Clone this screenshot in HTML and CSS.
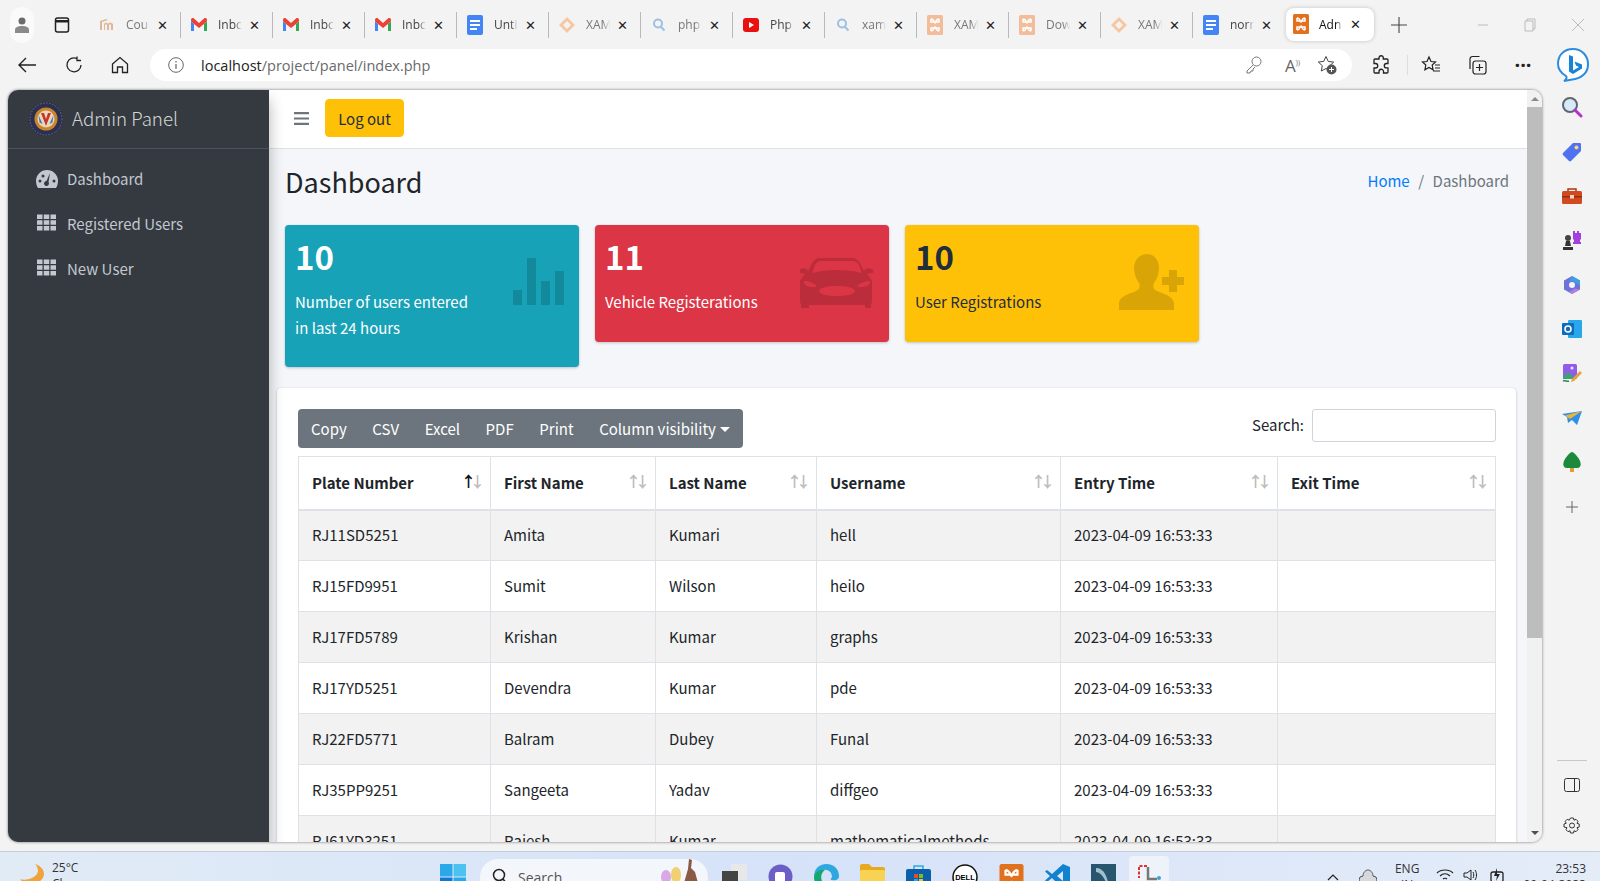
FILE: index.html
```html
<!DOCTYPE html>
<html lang="en">
<head>
    <meta charset="UTF-8">
    <meta name="viewport" content="width=device-width, initial-scale=1.0">
    <title>Admin Panel</title>
    <link rel="stylesheet" href="styles.css">
</head>
<body>
    <svg class="defs" width="0" height="0">
        <symbol id="i-gmail" viewBox="0 0 16 14"><path d="M0 3v10h3V6z" fill="#4285f4"/><path d="M13 6v7h3V3z" fill="#34a853"/><path d="M0 3l3 3 5 4 5-4 3-3V2c0-2-2-2.500-3-1.500L8 5 3 .5C2-.5 0 0 0 2z" fill="#ea4335"/></symbol>
        <symbol id="i-doc" viewBox="0 0 16 20"><rect width="16" height="20" rx="2" fill="#4285f4"/><path d="M3 5h10v2H3zM3 9h10v2H3zM3 13h7v2H3z" fill="#fff"/></symbol>
        <symbol id="i-diamond" viewBox="0 0 16 16"><path d="M8 0l8 8-8 8-8-8zM8 4L4 8l4 4 4-4z" fill="#f6c7a0" fill-rule="evenodd"/></symbol>
        <symbol id="i-search" viewBox="0 0 16 16"><circle cx="7" cy="6.500" r="4" fill="none" stroke="#9cc0e4" stroke-width="2"/><path d="M10 10l3.500 3.500" stroke="#9cc0e4" stroke-width="2"/></symbol>
        <symbol id="i-xampp" viewBox="0 0 16 20"><rect width="16" height="20" rx="1.500" fill="currentColor"/><path d="M4 4c3 0 3 3 4 4 1-1 1-4 4-4M4 16c3 0 3-3 4-4 1 1 1 4 4 4M4 4v3h3M12 4v3H9M4 16v-3h3M12 16v-3H9" fill="none" stroke="#fff" stroke-width="1.500"/></symbol>
        <symbol id="i-grid" viewBox="0 0 19 16"><path d="M0 0h5.500v4.500H0zM6.750 0h5.500v4.500h-5.500zM13.500 0H19v4.500h-5.500zM0 5.750h5.500v4.500H0zM6.750 5.750h5.500v4.500h-5.500zM13.500 5.750H19v4.500h-5.500zM0 11.500h5.500V16H0zM6.750 11.500h5.500V16h-5.500zM13.500 11.500H19V16h-5.500z" fill="currentColor"/></symbol>
    </svg>

    <div class="tabstrip">
        <div class="profile"><svg width="14" height="16" viewBox="0 0 14 16"><circle cx="7" cy="4" r="3.500" fill="#6b6b6b"/><path d="M0 16v-3c0-3 3-4 7-4s7 1 7 4v3z" fill="#8a8a8a"/></svg></div>
        <svg class="tab-actions" width="16" height="16" viewBox="0 0 16 16"><rect x="1.500" y="1" width="13" height="14" rx="2" fill="none" stroke="#222" stroke-width="1.500"/><path d="M1.500 3h13v2.500h-13z" fill="#222"/></svg>
        <div class="tabs">
            <div class="tab faded"><svg class="tab-icon" width="16" height="16" viewBox="0 0 16 16"><path d="M1 4l6-2 2 1-6 2v8H1zM5 7c2-2 3-2 4 0 1-2 3-2 5 0v6h-2V8c-1-1-2-1-2 0v5H8V8c-1-1-1-1-2 0v5H5z" fill="#e0b898"/></svg><span class="tab-title">Cou</span><span class="tab-close">✕</span></div>
            <div class="tab"><svg class="tab-icon" width="16" height="14"><use href="#i-gmail"/></svg><span class="tab-title">Inbc</span><span class="tab-close">✕</span></div>
            <div class="tab"><svg class="tab-icon" width="16" height="14"><use href="#i-gmail"/></svg><span class="tab-title">Inbc</span><span class="tab-close">✕</span></div>
            <div class="tab"><svg class="tab-icon" width="16" height="14"><use href="#i-gmail"/></svg><span class="tab-title">Inbc</span><span class="tab-close">✕</span></div>
            <div class="tab"><svg class="tab-icon" width="16" height="20"><use href="#i-doc"/></svg><span class="tab-title">Unti</span><span class="tab-close">✕</span></div>
            <div class="tab faded"><svg class="tab-icon" width="16" height="16"><use href="#i-diamond"/></svg><span class="tab-title">XAM</span><span class="tab-close">✕</span></div>
            <div class="tab faded"><svg class="tab-icon" width="16" height="16"><use href="#i-search"/></svg><span class="tab-title">php</span><span class="tab-close">✕</span></div>
            <div class="tab"><svg class="tab-icon" width="16" height="14" viewBox="0 0 16 14"><rect width="16" height="14" rx="3" fill="#e91010"/><path d="M6 4l5 3-5 3z" fill="#fff"/></svg><span class="tab-title">Php</span><span class="tab-close">✕</span></div>
            <div class="tab faded"><svg class="tab-icon" width="16" height="16"><use href="#i-search"/></svg><span class="tab-title">xam</span><span class="tab-close">✕</span></div>
            <div class="tab faded"><svg class="tab-icon xampp-faded" width="16" height="20"><use href="#i-xampp"/></svg><span class="tab-title">XAM</span><span class="tab-close">✕</span></div>
            <div class="tab faded"><svg class="tab-icon xampp-faded" width="16" height="20"><use href="#i-xampp"/></svg><span class="tab-title">Dow</span><span class="tab-close">✕</span></div>
            <div class="tab faded"><svg class="tab-icon" width="16" height="16"><use href="#i-diamond"/></svg><span class="tab-title">XAM</span><span class="tab-close">✕</span></div>
            <div class="tab no-sep"><svg class="tab-icon" width="16" height="20"><use href="#i-doc"/></svg><span class="tab-title">norr</span><span class="tab-close">✕</span></div>
            <div class="tab active"><svg class="tab-icon xampp-solid" width="16" height="20"><use href="#i-xampp"/></svg><span class="tab-title">Adn</span><span class="tab-close">✕</span></div>
        </div>
        <svg class="new-tab" width="16" height="16" viewBox="0 0 16 16"><path d="M8 0v16M0 8h16" stroke="#444" stroke-width="1.100"/></svg>
        <div class="win-controls">
            <svg width="10" height="10" viewBox="0 0 10 10"><path d="M0 5h10" stroke="#bbb"/></svg>
            <svg width="12" height="14" viewBox="0 0 12 14"><path d="M1 3h8v10H1zM3 3V1h8v10H9" fill="none" stroke="#bbb"/></svg>
            <svg width="12" height="12" viewBox="0 0 12 12"><path d="M0 0l12 12M12 0L0 12" stroke="#bbb"/></svg>
        </div>
    </div>

    <div class="toolbar">
        <svg class="tool-back" width="18" height="16" viewBox="0 0 18 16"><path d="M18 8H1M8 1L1 8l7 7" fill="none" stroke="#222" stroke-width="1.400"/></svg>
        <svg class="tool-reload" width="18" height="18" viewBox="0 0 18 18"><path d="M12 2.500A7 7 0 1 0 16 9M12 .5v4h4" fill="none" stroke="#222" stroke-width="1.300"/></svg>
        <svg class="tool-home" width="18" height="18" viewBox="0 0 18 18"><path d="M1.500 8L9 1.500 16.500 8v8.500h-5V11h-5v5.500h-5z" fill="none" stroke="#222" stroke-width="1.300"/></svg>
        <div class="urlbar">
            <svg class="url-info" width="16" height="16" viewBox="0 0 16 16"><circle cx="8" cy="8" r="7.300" fill="none" stroke="#666"/><path d="M8 7v5M8 4v1.500" stroke="#666" stroke-width="1.200"/></svg>
            <span class="url-text"><span class="url-host">localhost</span>/project/panel/index.php</span>
            <svg class="url-key" width="16" height="18" viewBox="0 0 16 18"><circle cx="10.500" cy="5.500" r="4.500" fill="none" stroke="#777"/><path d="M7 9l-6 6v2h3l1-2h2v-2l2-2" fill="none" stroke="#777"/></svg>
            <span class="url-read">A<sup>))</sup></span>
            <svg class="url-fav" width="20" height="20" viewBox="0 0 20 20"><path d="M9 1.500l2.300 5 5.400.6-4 3.700 1 5.300L9 13.500 4.300 16l1-5.300-4-3.700 5.400-.6z" fill="none" stroke="#444"/><circle cx="14.500" cy="14.500" r="5" fill="#555"/><path d="M14.500 12v5M12 14.500h5" stroke="#fff"/></svg>
        </div>
        <svg class="tool-ext" width="20" height="20" viewBox="0 0 20 20"><path d="M8 2.500a2.200 2.200 0 0 1 4.300 0V4H16a1 1 0 0 1 1 1v3.500h-1.500a2.200 2.200 0 0 0 0 4.400H17V17a1 1 0 0 1-1 1h-3.500v-1.500a2.200 2.200 0 0 0-4.500 0V18H4a1 1 0 0 1-1-1v-4h1.500a2.200 2.200 0 0 0 0-4.500H3V5a1 1 0 0 1 1-1h4z" fill="none" stroke="#222" stroke-width="1.300"/></svg>
        <span class="tool-sep"></span>
        <svg class="tool-favs" width="20" height="20" viewBox="0 0 20 20"><path d="M8 2l2 4.500 4.500.5-3.300 3 .9 4.800L8 12.500l-4.100 2.300.9-4.800L1.500 7 6 6.500zM14 10h5M14 13h5M12 16h7" fill="none" stroke="#222" stroke-width="1.200"/></svg>
        <svg class="tool-coll" width="20" height="20" viewBox="0 0 20 20"><rect x="6" y="6" width="13" height="13" rx="2.500" fill="none" stroke="#222" stroke-width="1.200"/><path d="M12.500 9v7M9 12.500h7M3 14V4a2.500 2.500 0 0 1 2.500-2.500h7" fill="none" stroke="#222" stroke-width="1.200"/></svg>
        <span class="tool-dots">···</span>
        <svg class="tool-bing" width="32" height="36" viewBox="0 0 32 34"><path d="M16 1c9 0 15 7 15 15 0 8-5 13-13 15l-11 2c3-2 3-4 2-5C4 25 1 21 1 16 1 7 7 1 16 1z" fill="#fff" stroke="#2b8be0" stroke-width="2"/><path d="M12 7l4 1.500v14l6-3.500-3-1.500-1.500-4 7.500 3v4l-9 5.500-4-2.500z" fill="#1583d8"/></svg>
    </div>

    <div class="main-row">
        <div class="browser-page">
            <aside class="sidebar">
                <div class="brand">
                    <svg class="brand-logo" width="34" height="34" viewBox="0 0 34 34"><circle cx="17" cy="17" r="17" fill="#2c3050"/><circle cx="17" cy="17" r="16" fill="none" stroke="#6c6f8c" stroke-width="1" stroke-dasharray="1.500 1.500"/><circle cx="17" cy="17" r="11.500" fill="#c9842e"/><circle cx="17" cy="17" r="8.500" fill="#ead9b8"/><path d="M9.500 13l4 9-3-1.500z" fill="#3f78b8"/><path d="M24.500 13l-4 9 3-1.500z" fill="#3f78b8"/><path d="M12 11l5 13 5-13h-3l-2 6-2-6z" fill="#c6362f"/></svg>
                    <span class="brand-text">Admin Panel</span>
                </div>
                <nav class="side-nav">
                    <a class="side-link" href="#"><svg class="side-icon" width="22" height="18" viewBox="0 0 22 18"><path d="M11 0a11 11 0 0 1 11 11c0 2.500-.7 5-2 7H2c-1.300-2-2-4.500-2-7A11 11 0 0 1 11 0zM4 9.500a1.500 1.500 0 1 0 0 3 1.500 1.500 0 0 0 0-3zM7 4.500a1.500 1.500 0 1 0 0 3 1.500 1.500 0 0 0 0-3zM18 9.500a1.500 1.500 0 1 0 0 3 1.500 1.500 0 0 0 0-3zM14 3l-3.500 8a2.500 2.500 0 1 0 2 1z" fill="currentColor" fill-rule="evenodd"/></svg>Dashboard</a>
                    <a class="side-link" href="#"><svg class="side-icon grid" width="19" height="17"><use href="#i-grid"/></svg>Registered Users</a>
                    <a class="side-link" href="#"><svg class="side-icon grid" width="19" height="17"><use href="#i-grid"/></svg>New User</a>
                </nav>
            </aside>

            <div class="content-wrap">
                <header class="navbar">
                    <svg class="hamburger" width="15" height="13" viewBox="0 0 15 13"><path d="M0 0h15v2.200H0zM0 5.400h15v2.200H0zM0 10.800h15V13H0z" fill="#6f7478"/></svg>
                    <button class="btn-logout">Log out</button>
                </header>

                <div class="content-head">
                    <h1>Dashboard</h1>
                    <div class="breadcrumb"><a href="#">Home</a><span class="crumb-sep">/</span><span class="crumb-now">Dashboard</span></div>
                </div>

                <div class="stat-row">
                    <div class="stat-box bg-info">
                        <h3>10</h3>
                        <p>Number of users entered<br>in last 24 hours</p>
                        <svg class="stat-icon" width="51" height="47" viewBox="0 0 51 47"><path d="M0 32h9v15H0zM14 0h9v47h-9zM28 23h9v24h-9zM42 13h9v34h-9z"/></svg>
                    </div>
                    <div class="stat-box bg-danger">
                        <h3>11</h3>
                        <p>Vehicle Registerations</p>
                        <svg class="stat-icon" width="74" height="50" viewBox="0 0 74 50"><path fill-rule="evenodd" d="M22 0h30c4 0 6 2 8 5l4 8 1-2c2-1 6-1 8 1 1 2 0 3-2 3l-4 1c2 2 4 4 5 7v19c0 2 0 3-1 4v4H65v-3H9v3H1v-4c-1-1-1-2-1-4V23c1-3 3-5 5-7l-4-1c-2 0-3-1-2-3 2-2 6-2 8-1l1 2 4-8c2-3 4-5 8-5zM21 3c-3 0-4 1-6 4l-3 8c7-2 16-3 25-3s18 1 25 3l-3-8c-2-3-3-4-6-4zM4 24c0 3 4 5 9 5 3 0 4-1 3-2-3-2-8-4-11-4-1 0-1 0-1 1zM70 24c0-1 0-1-1-1-3 0-8 2-11 4-1 1 0 2 3 2 5 0 9-2 9-5zM37 28c-10 0-18 2-18 5s8 5 18 5 18-2 18-5-8-5-18-5z"/></svg>
                    </div>
                    <div class="stat-box bg-warning">
                        <h3>10</h3>
                        <p>User Registrations</p>
                        <svg class="stat-icon" width="65" height="56" viewBox="0 0 65 56"><path d="M28 0c7 0 12 6 12 14 0 6-2 11-5 15-1 2-1 5 1 7 5 3 18 5 19 13l-0 7H0v-7c1-8 14-10 19-13 2-2 2-5 1-7-3-4-5-9-5-15C15 6 21 0 28 0z"/><path d="M50 16h8v7h7v8h-7v7h-8v-7h-7v-8h7z"/></svg>
                    </div>
                </div>

                <section class="table-card">
                    <div class="table-tools">
                        <div class="btn-group">
                            <span>Copy</span><span>CSV</span><span>Excel</span><span>PDF</span><span>Print</span><span class="caret-btn">Column visibility</span>
                        </div>
                        <label class="search-box">Search:<input type="search"></label>
                    </div>
                    <table class="data-table">
                        <colgroup><col class="col-plate"><col class="col-first"><col class="col-last"><col class="col-user"><col class="col-entry"><col class="col-exit"></colgroup>
                        <thead>
                            <tr><th class="sorted">Plate Number</th><th>First Name</th><th>Last Name</th><th>Username</th><th>Entry Time</th><th>Exit Time</th></tr>
                        </thead>
                        <tbody>
                            <tr><td>RJ11SD5251</td><td>Amita</td><td>Kumari</td><td>hell</td><td>2023-04-09 16:53:33</td><td></td></tr>
                            <tr><td>RJ15FD9951</td><td>Sumit</td><td>Wilson</td><td>heilo</td><td>2023-04-09 16:53:33</td><td></td></tr>
                            <tr><td>RJ17FD5789</td><td>Krishan</td><td>Kumar</td><td>graphs</td><td>2023-04-09 16:53:33</td><td></td></tr>
                            <tr><td>RJ17YD5251</td><td>Devendra</td><td>Kumar</td><td>pde</td><td>2023-04-09 16:53:33</td><td></td></tr>
                            <tr><td>RJ22FD5771</td><td>Balram</td><td>Dubey</td><td>Funal</td><td>2023-04-09 16:53:33</td><td></td></tr>
                            <tr><td>RJ35PP9251</td><td>Sangeeta</td><td>Yadav</td><td>diffgeo</td><td>2023-04-09 16:53:33</td><td></td></tr>
                            <tr><td>RJ61YD3251</td><td>Rajesh</td><td>Kumar</td><td>mathematicalmethods</td><td>2023-04-09 16:53:33</td><td></td></tr>
                        </tbody>
                    </table>
                </section>
            </div>

            <div class="page-scroll">
                <span class="arrow-up"></span>
                <div class="scroll-thumb"></div>
                <span class="arrow-down"></span>
            </div>
        </div>

        <div class="edge-bar">
            <div class="edge-apps">
                <svg width="22" height="22" viewBox="0 0 22 22"><circle cx="9" cy="9" r="7" fill="#d6ebf7" stroke="#5f6670" stroke-width="2"/><path d="M14 14l6 6" stroke="#b62fd0" stroke-width="3" stroke-linecap="round"/></svg>
                <svg width="20" height="20" viewBox="0 0 20 20"><path d="M11 1h7a1 1 0 0 1 1 1v7L9 19a1.500 1.500 0 0 1-2 0L1 13a1.500 1.500 0 0 1 0-2z" fill="#4f72f0"/><circle cx="14.500" cy="5.500" r="2" fill="#f2d58a"/></svg>
                <svg width="20" height="16" viewBox="0 0 20 16"><path d="M6 3V1h8v2" fill="none" stroke="#a8391a" stroke-width="1.500"/><rect y="3" width="20" height="13" rx="1.500" fill="#d2491f"/><path d="M0 8h20v1.500H0z" fill="#8f2e12"/><rect x="8" y="7" width="4" height="3.500" fill="#f3d9c8"/></svg>
                <svg width="20" height="20" viewBox="0 0 20 20"><path d="M11 1h2v2h2V1h2v2h2v6l-1 1v2h1v2h-8v-2h1v-2l-1-1z" fill="#a33fe0"/><circle cx="6" cy="8" r="3" fill="#444"/><path d="M4 11h4l1 5H3zM1 17h10v3H1z" fill="#333"/></svg>
                <svg width="20" height="20" viewBox="0 0 20 20"><path d="M10 1l8 4.500v9L10 19l-8-4.500v-9z" fill="#6d72d8"/><path d="M10 1l8 4.500v5l-5-3a4 4 0 0 0-6 0z" fill="#3fa0e0"/><path d="M18 14.500L10 19l-3-2 6-3.500z" fill="#b57be0"/><circle cx="10" cy="10" r="3" fill="#f3f3f3"/></svg>
                <svg width="20" height="18" viewBox="0 0 20 18"><rect x="6" width="14" height="18" rx="1" fill="#28a8ea"/><rect y="3" width="12" height="12" rx="1" fill="#0f6cbd"/><circle cx="6" cy="9" r="3" fill="none" stroke="#fff" stroke-width="1.500"/></svg>
                <svg width="20" height="20" viewBox="0 0 20 20"><rect x="1" width="14" height="15" rx="1.500" fill="#8f5de8"/><path d="M1 13l5-5 5 4v3H1z" fill="#3ea275"/><circle cx="10" cy="4" r="1.500" fill="#f6e0ff"/><path d="M10 15l8-8 2 2-8 8-3 1z" fill="#e8a23c"/><path d="M1 17c2-1 4 1 6 0" stroke="#2f8a5a" stroke-width="1.500" fill="none"/></svg>
                <svg width="20" height="14" viewBox="0 0 20 14"><path d="M0 3l20-3-5 14-5-5-4 3-1-6z" fill="#2f8fe8"/><path d="M3 4.500L20 0 8 8z" fill="#e9b43c"/></svg>
                <svg width="18" height="20" viewBox="0 0 18 20"><path d="M9 0c2 0 5 4 7 7 2 3 3 9-2 9H4c-5 0-4-6-2-9 2-3 5-7 7-7z" fill="#1c8a3c"/><rect x="7" y="16" width="4" height="4" fill="#e0a030"/></svg>
                <svg width="12" height="12" viewBox="0 0 12 12"><path d="M6 0v12M0 6h12" stroke="#666"/></svg>
            </div>
            <div class="edge-bottom">
                <span class="edge-line"></span>
                <svg width="16" height="14" viewBox="0 0 16 14"><rect x=".5" y=".5" width="15" height="13" rx="2" fill="none" stroke="#333"/><path d="M10.500 1v12" stroke="#333"/></svg>
                <svg width="18" height="18" viewBox="0 0 18 18"><path d="M7.500 1h3l.5 2.200 2-.9 2 2-1 2 2.200.7v3l-2.200.7 1 2-2 2-2-1-.5 2.300h-3l-.5-2.300-2 1-2-2 1-2L1 10V7l2.200-.7-1-2 2-2 2 .9z" fill="none" stroke="#333"/><circle cx="9" cy="8.500" r="2.500" fill="none" stroke="#333"/></svg>
            </div>
        </div>
    </div>

    <footer class="taskbar">
        <div class="weather">
            <svg width="24" height="20" viewBox="0 0 24 30" preserveAspectRatio="none"><path d="M15 0c6 3 9 9 9 15 0 8-6 15-13 15-5 0-9-3-11-7 9 2 17-3 18-12 0-4-1-8-3-11z" fill="#f0a33a"/></svg>
            <div class="weather-text">25°C<br>Clear</div>
        </div>
        <svg class="win-logo" width="26" height="26" viewBox="0 0 26 26"><path d="M0 0h12.500v12.500H0z" fill="#29a8ea"/><path d="M13.500 0H26v12.500H13.500z" fill="#4cc2f1"/><path d="M0 13.500h12.500V26H0z" fill="#0f78d4"/><path d="M13.500 13.500H26V26H13.500z" fill="#29a8ea"/></svg>
        <div class="task-search">
            <svg width="16" height="18" viewBox="0 0 16 18"><circle cx="7" cy="7" r="5.500" fill="none" stroke="#222" stroke-width="1.500"/><path d="M11 11l4 5" stroke="#222" stroke-width="1.500"/></svg>
            <span>Search</span>
            <svg class="search-art" width="44" height="24" viewBox="0 0 44 24"><ellipse cx="8" cy="18" rx="5" ry="7" fill="#d8a8e8"/><ellipse cx="18" cy="16" rx="5" ry="8" fill="#f0d070"/><path d="M26 24l4-14 1-10 3 1-1 8 4 4 3 11z" fill="#8a5a44"/></svg>
        </div>
        <div class="task-icons">
            <svg width="25" height="25" viewBox="0 0 25 25"><rect x="9" width="16" height="16" fill="#e8e8e8"/><rect y="7" width="16" height="18" fill="#444"/></svg>
            <svg width="25" height="25" viewBox="0 0 25 25"><circle cx="12.500" cy="12.500" r="12" fill="#6b5fc7"/><rect x="7" y="8" width="10" height="10" rx="2" fill="#fff"/></svg>
            <svg width="25" height="25" viewBox="0 0 25 25"><path d="M12.500 0C20 0 25 5 25 12c0 4-4 5-7 4-2 0-1-2 0-3 0-5-4-8-9-7C4 7 1 11 0 13 0 5 5 0 12.500 0z" fill="#2fa8e0"/><path d="M0 13c0 7 5 12 13 12 4 0 7-2 9-4-5 2-12 1-14-4-2-5 0-9 3-11C6 5 1 8 0 13z" fill="#13a86e"/></svg>
            <svg width="25" height="23" viewBox="0 0 25 23"><path d="M0 2a2 2 0 0 1 2-2h7l3 3h11a2 2 0 0 1 2 2v2H0z" fill="#e9a820"/><rect y="6" width="25" height="17" rx="2" fill="#f8d252"/></svg>
            <svg width="25" height="25" viewBox="0 0 25 25"><path d="M8 5V2h9v3" fill="none" stroke="#2fa8e0" stroke-width="1.500"/><rect y="5" width="25" height="20" rx="2" fill="#0a5fa8"/><path d="M8 10h4v4H8z" fill="#e84a2c"/><path d="M13 10h4v4h-4z" fill="#7fba2c"/><path d="M8 15h4v4H8z" fill="#2fa8e0"/><path d="M13 15h4v4h-4z" fill="#f8c020"/></svg>
            <svg width="26" height="26" viewBox="0 0 26 26"><circle cx="13" cy="13" r="12" fill="#fff" stroke="#111" stroke-width="1.500"/><text class="dell-text" x="13" y="16">DELL</text></svg>
            <svg width="25" height="30" class="task-xampp"><use href="#i-xampp"/></svg>
            <svg width="25" height="25" viewBox="0 0 25 25"><path d="M18 0l7 3v19l-7 3L7 14l-5 4-2-1.500L5 12 0 7.500 2 6l5 4zM18 7l-6 5 6 5z" fill="#1182d0" fill-rule="evenodd"/></svg>
            <svg width="25" height="25" viewBox="0 0 25 25"><rect width="25" height="25" fill="#28566f"/><path d="M5 4c6 0 10 5 12 14l3 2-5-2C12 12 9 8 5 8z" fill="#9fc0d0"/></svg>
            <div class="task-active"><svg width="25" height="25" viewBox="0 0 25 25"><path d="M10 2H2v12" fill="none" stroke="#e03030" stroke-width="2" stroke-dasharray="3 1.500"/><path d="M11 3v12h9" fill="none" stroke="#777" stroke-width="2.500"/><circle cx="22" cy="14" r="2" fill="#40a0d8"/></svg></div>
        </div>
        <div class="tray">
            <svg class="tray-up" width="12" height="8" viewBox="0 0 12 8"><path d="M1 7l5-5 5 5" fill="none" stroke="#222" stroke-width="1.200"/></svg>
            <svg width="18" height="18" viewBox="0 0 18 18"><path d="M4 16a4 4 0 0 1 0-8c0-4 3-6 5-6s5 2 5 6a4 4 0 0 1 0 8z" fill="#d5d9de" stroke="#555"/></svg>
            <div class="tray-lang">ENG<br>IN</div>
            <svg class="tray-wifi" width="18" height="14" viewBox="0 0 18 14"><path d="M1 5c4-4 12-4 16 0M4 8c3-3 7-3 10 0M7 11c1-1 3-1 4 0" fill="none" stroke="#222" stroke-width="1.200"/></svg>
            <svg class="tray-vol" width="15" height="14" viewBox="0 0 15 14"><path d="M1 5h3l4-3v10L4 9H1zM10 4c1 2 1 4 0 6M12 2c2 3 2 7 0 10" fill="none" stroke="#222"/></svg>
            <svg width="16" height="16" viewBox="0 0 16 16"><rect x="1" y="4" width="12" height="10" rx="2" fill="none" stroke="#222" stroke-width="1.300"/><path d="M7 0L4 8h3l-1 5 4-7H7z" fill="#222"/></svg>
            <div class="tray-clock">23:53<br>09-04-2023</div>
        </div>
    </footer>
</body>
</html>
```

FILE: styles.css
```css
* {
    box-sizing: border-box;
}

html, body {
    margin: 0;
    height: 881px;
    overflow: hidden;
}

body {
    font-family: "Noto Sans CJK SC", "Lato", sans-serif;
    font-size: 15px;
    background-color: #f3f3f3;
    color: #212529;
}

.defs {
    display: block;
    height: 0;
}

/* browser chrome */
.tabstrip {
    display: flex;
    align-items: center;
    height: 45px;
    padding-top: 4px;
    font-family: "Open Sans", sans-serif;
    font-size: 12px;
    color: #444;
}

.profile {
    display: flex;
    align-items: center;
    justify-content: center;
    width: 24px;
    height: 36px;
    margin-left: 10px;
    border-radius: 12px;
    background-color: #fafafa;
}

.tab-actions {
    margin-left: 20px;
}

.tabs {
    display: flex;
    align-items: center;
    margin-left: 19px;
}

.tab {
    display: flex;
    align-items: center;
    width: 92px;
    height: 26px;
    padding-left: 10px;
    border-right: 1px solid #b9b9b9;
}

.tab.no-sep {
    border-right: none;
    width: 93px;
}

.tab-icon {
    flex-shrink: 0;
}

.tab-title {
    width: 24px;
    margin-left: 11px;
    overflow: hidden;
    white-space: nowrap;
    -webkit-mask-image: linear-gradient(90deg, #000 70%, transparent);
    mask-image: linear-gradient(90deg, #000 70%, transparent);
}

.tab-close {
    margin-left: 7px;
    font-size: 13px;
    color: #222;
}

.tab.faded .tab-title {
    color: #777;
}

.tab.active {
    width: 88px;
    height: 33px;
    margin-top: -1px;
    padding-left: 7px;
    border-right: none;
    border-radius: 8px;
    background-color: #fff;
    box-shadow: 0 0 4px rgba(0, 0, 0, 0.2);
}

.tab.active .tab-title {
    color: #111;
    margin-left: 10px;
}

.xampp-faded {
    color: #f2bd9a;
}

.xampp-solid {
    color: #e2711d;
}

.new-tab {
    margin-left: 17px;
}

.win-controls {
    display: flex;
    align-items: center;
    gap: 36px;
    margin-left: 71px;
}

.toolbar {
    display: flex;
    align-items: center;
    height: 45px;
    padding-bottom: 5px;
}

.tool-back {
    margin-left: 18px;
}

.tool-reload {
    margin-left: 29px;
}

.tool-home {
    margin-left: 28px;
}

.urlbar {
    display: flex;
    align-items: center;
    width: 1202px;
    height: 32px;
    margin-left: 21px;
    padding-left: 18px;
    border-radius: 16px;
    background-color: #fff;
}

.url-text {
    flex: 1;
    margin-left: 17px;
    font-family: "Open Sans", sans-serif;
    font-size: 14.5px;
    color: #6a6a6a;
}

.url-host {
    color: #222;
}

.url-read {
    margin-left: 23px;
    font-family: "Open Sans", sans-serif;
    font-size: 17px;
    color: #666;
}

.url-read sup {
    font-size: 7px;
}

.url-fav {
    margin-left: 17px;
    margin-right: 15px;
}

.tool-ext {
    margin-left: 19px;
}

.tool-sep {
    width: 1px;
    height: 20px;
    margin-left: 16px;
    background-color: #ddd;
}

.tool-favs {
    margin-left: 13px;
}

.tool-coll {
    margin-left: 26px;
}

.tool-dots {
    width: 20px;
    margin-left: 26px;
    font-family: "Open Sans", sans-serif;
    font-size: 20px;
    font-weight: 700;
    line-height: 1;
    text-align: center;
    color: #222;
}

.tool-bing {
    margin-left: 24px;
}

/* page area */
.main-row {
    display: flex;
    height: 752px;
}

.browser-page {
    display: flex;
    width: 1534px;
    margin-left: 8px;
    border-radius: 10px;
    overflow: hidden;
    box-shadow: 0 0 3px rgba(0, 0, 0, 0.55);
    background-color: #f4f6f9;
}

.sidebar {
    flex: 0 0 261px;
    background-color: #343a40;
    color: #c2c7d0;
    box-shadow: 0 10px 14px rgba(0, 0, 0, 0.3);
    z-index: 1;
}

.brand {
    display: flex;
    align-items: center;
    height: 59px;
    padding-left: 21px;
    padding-bottom: 1px;
    border-bottom: 1px solid #4b545c;
}

.brand-logo {
    flex-shrink: 0;
}

.brand-text {
    margin-left: 9px;
    margin-top: -2px;
    font-size: 18.7px;
    font-weight: 300;
    color: rgba(255, 255, 255, 0.8);
}

.side-nav {
    padding-top: 7px;
}

.side-link {
    display: flex;
    align-items: center;
    height: 45px;
    padding-left: 28px;
    color: #c2c7d0;
    text-decoration: none;
    line-height: 24px;
}

.side-icon {
    width: 22px;
    margin-right: 9px;
    flex-shrink: 0;
}

.side-icon.grid {
    width: 19px;
    margin-left: 1px;
    margin-right: 11px;
    margin-top: -3px;
}

.content-wrap {
    flex: 1;
    min-width: 0;
    overflow: hidden;
}

.navbar {
    display: flex;
    align-items: center;
    height: 59px;
    padding-left: 25px;
    padding-bottom: 2px;
    background-color: #fff;
    border-bottom: 1px solid #dee2e6;
}

.btn-logout {
    margin-left: 16px;
    height: 38px;
    width: 79px;
    border: 1px solid #ffc107;
    border-radius: 4px;
    background-color: #ffc107;
    font-family: inherit;
    font-size: 15px;
    color: #1f2d3d;
}

.content-head {
    display: flex;
    justify-content: space-between;
    align-items: center;
    height: 76px;
    padding: 0 18px 8px 16px;
}

h1 {
    margin: -3px 0 0;
    font-size: 27px;
    font-weight: 400;
    line-height: 36px;
    color: #212529;
}

.breadcrumb {
    margin-top: -5px;
    color: #6c757d;
    line-height: 24px;
}

.breadcrumb a {
    color: #007bff;
    text-decoration: none;
}

.crumb-sep {
    margin: 0 8.5px;
}

.stat-row {
    display: flex;
    align-items: flex-start;
    gap: 16px;
    padding-left: 16px;
}

.stat-box {
    position: relative;
    width: 294px;
    padding: 10px;
    border-radius: 4px;
    box-shadow: 0 0 1px rgba(0, 0, 0, 0.125), 0 1px 3px rgba(0, 0, 0, 0.2);
    color: #fff;
}

.stat-box h3 {
    margin: 1px 0 0;
    font-size: 33px;
    font-weight: 700;
    line-height: 40px;
}

.stat-box p {
    margin: 13px 0 0;
    padding-bottom: 15px;
    line-height: 25.5px;
}

.stat-icon {
    position: absolute;
    right: 15px;
    top: 33px;
    fill: rgba(0, 0, 0, 0.15);
}

.bg-info {
    background-color: #17a2b8;
    padding-bottom: 12px;
}

.bg-danger {
    background-color: #dc3545;
    height: 117px;
}

.bg-warning {
    background-color: #ffc107;
    color: #1f2d3d;
    height: 117px;
}

.bg-warning .stat-icon {
    top: 29px;
}

.table-card {
    margin: 21px 11px 0 8px;
    padding: 21px 20px 20px 21px;
    border-radius: 4px;
    background-color: #fff;
    box-shadow: 0 0 1px rgba(0, 0, 0, 0.125), 0 1px 3px rgba(0, 0, 0, 0.2);
}

.table-tools {
    display: flex;
    justify-content: space-between;
    align-items: flex-start;
    height: 47px;
}

.btn-group {
    display: flex;
    width: 445px;
    height: 39px;
    padding-left: 13px;
    padding-bottom: 1px;
    align-items: center;
    border-radius: 4px;
    background-color: #6c757d;
    color: #fff;
}

.btn-group span {
    margin-right: 25.6px;
}

.btn-group .caret-btn {
    margin-right: 0;
    position: relative;
}

.caret-btn::after {
    content: "";
    position: absolute;
    left: calc(100% + 4px);
    top: 9px;
    border-top: 5px solid #fff;
    border-left: 5px solid transparent;
    border-right: 5px solid transparent;
}

.search-box {
    display: flex;
    align-items: center;
    gap: 8px;
}

.search-box input {
    width: 184px;
    height: 33px;
    margin-bottom: -2px;
    border: 1px solid #ced4da;
    border-radius: 3px;
    background-color: #fff;
}

.data-table {
    width: 1197px;
    table-layout: fixed;
    border-collapse: collapse;
    line-height: 24px;
}

.col-plate { width: 192px; }
.col-first { width: 165px; }
.col-last { width: 161px; }
.col-user { width: 244px; }
.col-entry { width: 217px; }
.col-exit { width: 218px; }

.data-table th, .data-table td {
    height: 51px;
    padding: 12px 13px;
    border: 1px solid #dee2e6;
    text-align: left;
    white-space: nowrap;
}

.data-table th {
    position: relative;
    height: 53px;
    font-weight: 700;
    border-bottom-width: 2px;
}

.data-table th::before, .data-table th::after {
    position: absolute;
    top: 12px;
    font-size: 15px;
    font-weight: 700;
    color: #bdbdbd;
}

.data-table th::before {
    content: "\2191";
    right: 14px;
}

.data-table th::after {
    content: "\2193";
    right: 5px;
}

.data-table th.sorted::before {
    color: #111;
}

.data-table tbody tr:nth-child(odd) {
    background-color: #f2f2f2;
}

.page-scroll {
    flex: 0 0 15px;
    display: flex;
    flex-direction: column;
    align-items: center;
    background-color: #f1f1f1;
}

.scroll-thumb {
    width: 15px;
    height: 531px;
    background-color: #bdbdbd;
}

.arrow-up {
    width: 0;
    height: 0;
    margin: 7px 0 6px;
    border-bottom: 4px solid #8a8a8a;
    border-left: 4px solid transparent;
    border-right: 4px solid transparent;
}

.arrow-down {
    width: 0;
    height: 0;
    margin-top: auto;
    margin-bottom: 7px;
    border-top: 4px solid #505050;
    border-left: 4px solid transparent;
    border-right: 4px solid transparent;
}

/* edge sidebar */
.edge-bar {
    flex: 1;
    display: flex;
    flex-direction: column;
    justify-content: space-between;
    padding: 0 0 7px 2px;
}

.edge-apps {
    display: grid;
    grid-auto-rows: 44.4px;
    place-items: center;
    margin-top: -5px;
}

.edge-bottom {
    display: flex;
    flex-direction: column;
    align-items: center;
    gap: 25px;
}

.edge-line {
    width: 30px;
    height: 1px;
    margin-bottom: -8px;
    background-color: #c8c8c8;
}

/* taskbar */
.taskbar {
    display: flex;
    align-items: flex-start;
    height: 48px;
    margin-top: 9px;
    border-top: 1px solid #c3cedb;
    background: linear-gradient(90deg, #e1ebf6, #d6e2f8 50%, #e4ecf8);
}

.weather {
    display: flex;
    flex: 0 0 440px;
    padding: 12px 0 0 20px;
}

.weather-text {
    margin-left: 8px;
    margin-top: -4px;
    font-family: "Open Sans", sans-serif;
    font-size: 12px;
    line-height: 16px;
    color: #333;
}

.win-logo {
    margin-top: 12px;
}

.task-search {
    display: flex;
    align-items: center;
    position: relative;
    width: 228px;
    height: 36px;
    margin: 7px 0 0 14px;
    padding-left: 12px;
    border-radius: 18px;
    background-color: #f3f6fb;
    font-family: "Open Sans", sans-serif;
    font-size: 14px;
    color: #555;
}

.task-search span {
    margin-left: 10px;
}

.search-art {
    position: absolute;
    right: 6px;
    top: 0;
}

.task-icons {
    display: flex;
    align-items: flex-start;
    gap: 21px;
    margin: 12px 0 0 14px;
}

.task-active {
    display: flex;
    justify-content: center;
    width: 40px;
    height: 40px;
    margin: -8px 0 0 -8px;
    padding-top: 8px;
    border-radius: 4px;
    background-color: #eef3fa;
}

.task-xampp {
    color: #e2711d;
}

.dell-text {
    font-family: "Liberation Sans", sans-serif;
    font-size: 7.5px;
    font-weight: 700;
    text-anchor: middle;
}

.tray {
    display: flex;
    align-items: flex-start;
    margin-left: auto;
    padding-right: 14px;
    padding-top: 9px;
    font-family: "Open Sans", sans-serif;
    font-size: 12px;
    line-height: 16px;
    color: #333;
}

.tray svg {
    margin-top: 7px;
    margin-right: 9px;
}

.tray .tray-up {
    margin-top: 12px;
    margin-right: 20px;
}

.tray .tray-vol {
    margin-right: 12px;
}

.tray-lang {
    margin: 0 17px 0 9px;
    text-align: center;
}

.tray-clock {
    margin-left: 8px;
    text-align: right;
}
```
